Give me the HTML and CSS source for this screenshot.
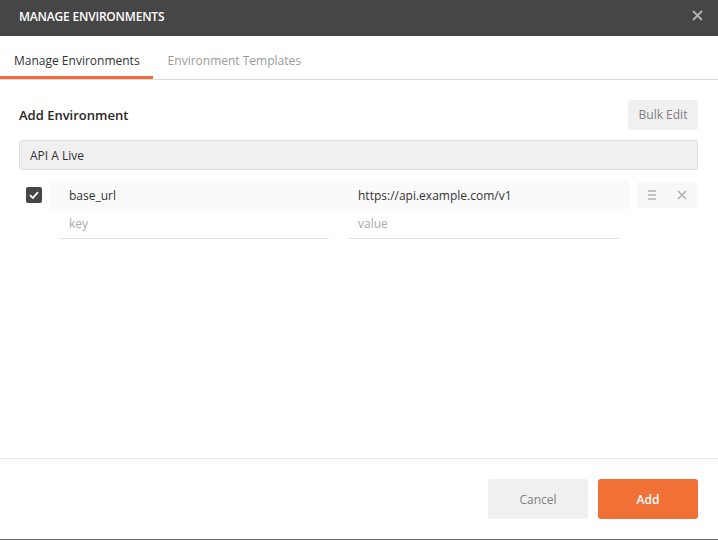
FILE: index.html
```html
<!DOCTYPE html>
<html>
<head>
<meta charset="utf-8">
<link rel="stylesheet" href="styles.css">
</head>
<body>
<div class="dialog">
  <div class="header">
    <span class="title">MANAGE ENVIRONMENTS</span>
    <svg class="close" width="11" height="11" viewBox="0 0 11 11"><path d="M1 1L10 10M10 1L1 10" stroke="#b4b4b4" stroke-width="1.8" fill="none"/></svg>
  </div>
  <div class="tabs">
    <div class="tab active">Manage Environments</div>
    <div class="tab">Environment Templates</div>
  </div>
  <div class="content">
    <div class="section-head">
      <span class="section-title">Add Environment</span>
      <button class="btn-bulk">Bulk Edit</button>
    </div>
    <div class="name-input">API A Live</div>
    <div class="var-row filled">
      <div class="check-cell"><span class="checkbox"><svg width="10" height="8" viewBox="0 0 10 8"><path d="M1 4.2L3.8 7L9 1.2" stroke="#fff" stroke-width="1.8" fill="none"/></svg></span></div>
      <div class="kv">
        <div class="cell"><span class="cell-text">base_url</span></div>
        <div class="cell"><span class="cell-text">https://api.example.com/v1</span></div>
      </div>
      <div class="actions">
        <svg width="8" height="10" viewBox="0 0 8 10"><path d="M0 1H8M0 5H8M0 9H8" stroke="#b0b0b0" stroke-width="1.4"/></svg>
        <svg width="10" height="10" viewBox="0 0 10 10"><path d="M1 1L9 9M9 1L1 9" stroke="#b0b0b0" stroke-width="1.6" fill="none"/></svg>
      </div>
    </div>
    <div class="var-row empty">
      <div class="check-cell"></div>
      <div class="kv">
        <div class="cell"><span class="cell-text placeholder">key</span></div>
        <div class="cell"><span class="cell-text placeholder">value</span></div>
      </div>
      <div class="actions-space"></div>
    </div>
  </div>
  <div class="footer">
    <button class="btn btn-cancel">Cancel</button>
    <button class="btn btn-add">Add</button>
  </div>
</div>
</body>
</html>
```
FILE: styles.css
```css
* { box-sizing: border-box; }
html, body { margin: 0; padding: 0; }
body {
  font-family: "Open Sans", "Noto Sans", sans-serif;
  color: #282828;
  background: #fff;
}
.dialog {
  width: 718px;
  height: 540px;
  display: flex;
  flex-direction: column;
  border-bottom: 1px solid #666;
}
.header {
  height: 36px;
  background: #464646;
  display: flex;
  align-items: center;
  justify-content: space-between;
  padding: 0 15px 0 19px;
  flex: none;
}
.title {
  color: #fff;
  font-size: 12px;
  font-weight: 600;
  letter-spacing: -0.2px;
  margin-top: -4px;
}
.close { margin-top: -5px; }
.tabs {
  height: 44px;
  display: flex;
  border-bottom: 1px solid #dcdcdc;
  flex: none;
}
.tab {
  padding: 8px 13px 0 14px;
  font-size: 12px;
  color: #9a9a9a;
  display: flex;
  align-items: center;
  border-bottom: 3px solid transparent;
}
.tab.active {
  color: #333;
  border-bottom-color: #f26b3a;
}
.tab + .tab { padding-left: 15px; }
.content {
  flex: 1;
  padding: 20px 20px 0 19px;
}
.section-head {
  display: flex;
  align-items: center;
  justify-content: space-between;
  height: 29px;
}
.section-title {
  font-size: 13px;
  font-weight: 600;
  color: #282828;
}
.btn-bulk {
  font-family: inherit;
  font-size: 12px;
  color: #808080;
  background: #f0f0f0;
  border: none;
  border-radius: 3px;
  height: 30px;
  width: 70px;
  padding: 0;
}
.name-input {
  margin-top: 11px;
  height: 30px;
  background: #f0f0f0;
  border: 1px solid #dedede;
  border-radius: 3px;
  font-size: 12px;
  color: #333;
  padding: 0 10px;
  display: flex;
  align-items: center;
}
.var-row {
  display: flex;
  height: 28px;
}
.var-row.filled { margin-top: 11px; }
.var-row.empty { height: 30px; }
.check-cell {
  width: 30px;
  flex: none;
  display: flex;
  align-items: center;
  justify-content: center;
}
.checkbox {
  width: 16px;
  height: 16px;
  background: #464646;
  border-radius: 2px;
  display: flex;
  align-items: center;
  justify-content: center;
}
.kv {
  flex: none;
  width: 580px;
  display: grid;
  grid-template-columns: 289px 291px;
}
.filled .kv { background: #fafafa; }
.cell {
  padding: 0 9px 0 10px;
  display: flex;
}
.cell-text {
  flex: 1;
  display: flex;
  align-items: center;
  padding-left: 10px;
  font-size: 12px;
  color: #333;
}
.empty .cell-text {
  border-bottom: 1px solid #e4e4e4;
}
.cell-text.placeholder { color: #aaa; }
.actions {
  margin: 1px 0 1px 8px;
  width: 60px;
  background: #f8f8f8;
  border-radius: 3px;
  display: flex;
  align-items: center;
  justify-content: space-between;
  padding: 0 10px 0 11px;
}
.footer {
  flex: none;
  height: 81px;
  border-top: 1px solid #e6e6e6;
  display: flex;
  justify-content: flex-end;
  align-items: flex-start;
  gap: 10px;
  padding: 20px 20px 0 0;
}
.btn {
  font-family: inherit;
  font-size: 12px;
  width: 100px;
  height: 40px;
  border: none;
  border-radius: 3px;
  padding: 0;
}
.btn-cancel { background: #f0f0f0; color: #808080; }
.btn-add { background: #f07036; color: #fff; font-weight: 600; }
```
